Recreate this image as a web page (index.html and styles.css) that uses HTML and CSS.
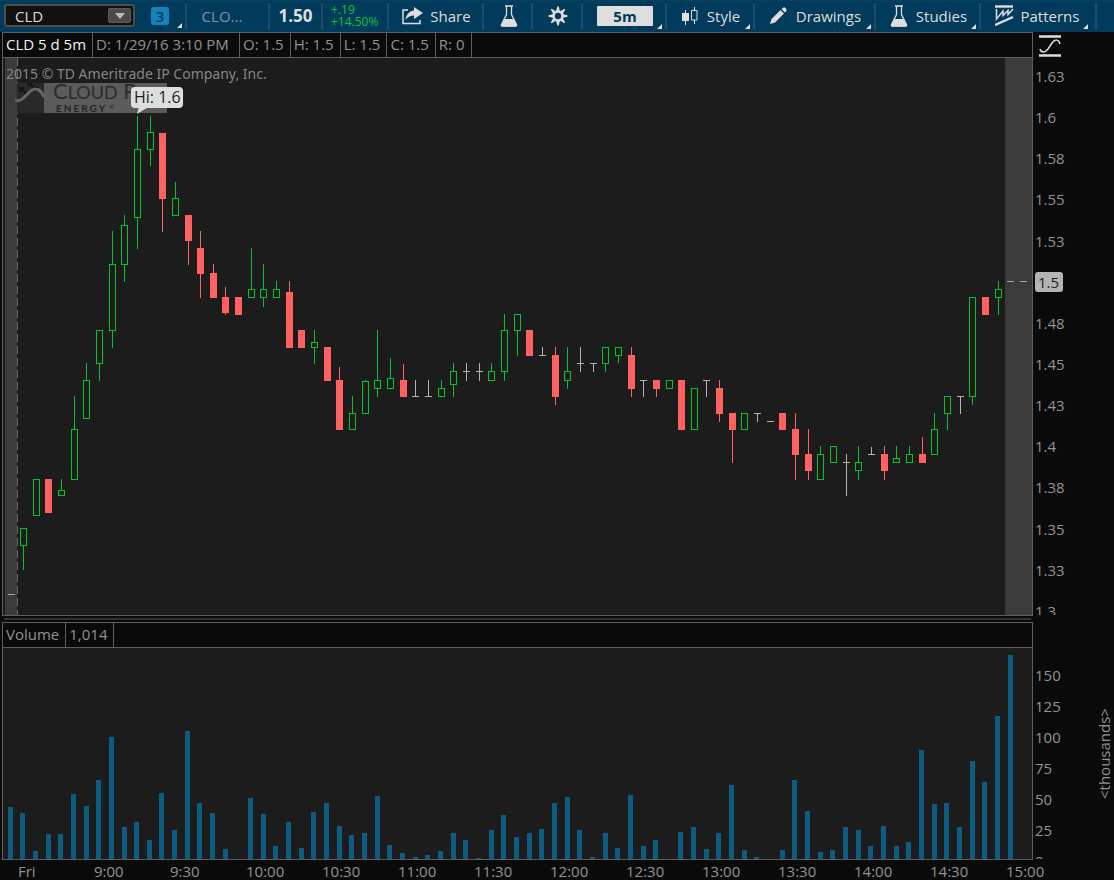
FILE: index.html
```html
<!DOCTYPE html>
<html lang="en">
<head>
<meta charset="utf-8">
<title>CLD 5 d 5m</title>
<link rel="stylesheet" href="styles.css">
</head>
<body>
<header class="toolbar">
  <div class="tool symbol-cell">
    <div class="combo">
      <input class="combo-input" type="text" value="CLD" aria-label="Symbol">
      <button class="combo-arrow" aria-label="Symbol list"><svg width="10" height="6" viewBox="0 0 10 6"><path d="M0 0H10L5 6Z" fill="#b9b9b9"/></svg></button>
    </div>
    <button class="link-button menu"><span class="link-badge">3</span></button>
  </div>
  <div class="tool name-cell">CLO...</div>
  <div class="tool last-cell">1.50</div>
  <div class="tool change-cell"><span>+.19</span><span>+14.50%</span></div>
  <button class="tool share-cell">
    <svg width="21" height="18" viewBox="0 0 21 18"><path d="M6 3H1V16.500H18V13" fill="none" stroke="#dedede" stroke-width="1.500"/><path d="M12 0L21 6L12 12V8.500C8.500 8.500 6 9.500 3.500 13C4 8 7 4 12 3.500Z" fill="#dedede"/></svg>
    Share</button>
  <button class="tool flask-cell" aria-label="Edit studies">
    <svg width="18" height="22" viewBox="0 0 18 22"><path d="M5 1H13M6.500 1V9.500L1.500 19.500Q1 21 2.500 21H15.500Q17 21 16.500 19.500L11.500 9.500V1" fill="none" stroke="#dedede" stroke-width="1.300"/><path d="M4.500 14H13.500L17 20.500Q17 21.500 15.500 21.500H2.500Q1 21.500 1 20.500Z" fill="#dedede"/></svg>
  </button>
  <button class="tool gear-cell" aria-label="Settings">
    <svg width="20" height="20" viewBox="-10 -10 20 20"><g fill="#dedede"><path d="M-1.800 -5L-.7 -9.500H.7L1.800 -5Z" id="tooth"/><use href="#tooth" transform="rotate(45)"/><use href="#tooth" transform="rotate(90)"/><use href="#tooth" transform="rotate(135)"/><use href="#tooth" transform="rotate(180)"/><use href="#tooth" transform="rotate(225)"/><use href="#tooth" transform="rotate(270)"/><use href="#tooth" transform="rotate(315)"/></g><circle r="4.500" fill="none" stroke="#dedede" stroke-width="2.600"/></svg>
  </button>
  <button class="tool period-cell menu"><span class="period">5m</span></button>
  <button class="tool style-cell menu">
    <svg width="16" height="18" viewBox="0 0 16 18"><path d="M3.500 3V18M12.500 0V3M12.500 13V17" stroke="#dedede"/><path d="M0 6H7V14H0Z" fill="#dedede"/><path d="M9.500 3.500H15V13H9.500Z" fill="none" stroke="#dedede"/></svg>
    Style</button>
  <button class="tool drawings-cell menu">
    <svg width="17" height="17" viewBox="0 0 17 17"><path d="M0 17L1.500 12L10.500 3L14 6.500L5 15.500ZM11.500 2L13.500 .5Q14.500 0 15.500 1L16.500 2.500Q17 3.500 16 4.500L15 5.500Z" fill="#dedede"/></svg>
    Drawings</button>
  <button class="tool studies-cell menu">
    <svg width="18" height="22" viewBox="0 0 18 22"><path d="M5 1H13M6.500 1V9.500L1.500 19.500Q1 21 2.500 21H15.500Q17 21 16.500 19.500L11.500 9.500V1" fill="none" stroke="#dedede" stroke-width="1.300"/><path d="M4.500 14H13.500L17 20.500Q17 21.500 15.500 21.500H2.500Q1 21.500 1 20.500Z" fill="#dedede"/></svg>
    Studies</button>
  <button class="tool patterns-cell menu">
    <svg width="19" height="21" viewBox="0 0 19 21"><path d="M0 1.500H18" stroke="#dedede" stroke-width="2.400"/><path d="M0 20L18 12" stroke="#dedede" stroke-width="2.400"/><path d="M1.500 4V14L8 6V10.500L13 5.500V9.500L18 4" fill="none" stroke="#dedede" stroke-width="1.500"/></svg>
    Patterns</button>
</header>

<main class="chart">
  <section class="panel price-panel" aria-label="Price">
    <div class="status">
      <span class="status-title">CLD 5 d 5m</span><span class="status-date">D: 1/29/16 3:10 PM</span><span>O: 1.5</span><span>H: 1.5</span><span>L: 1.5</span><span>C: 1.5</span><span>R: 0</span>
    </div>
    <div class="plot">
      <svg class="series" id="price" viewBox="3 58 1029 557" preserveAspectRatio="none">
        <path d="M5 58H17V615H5ZM1005 58H1032V615H1005Z" fill="#3b3b3b"/>
        <path d="M17.500 58V615" stroke="#666" stroke-dasharray="8 4"/>
        <path d="M8 594.500H15M1007 281.500H1014M1020 281.500H1027" stroke="#a8a8a8"/>
      </svg>
      <div class="company">
        <p class="copyright">2015 © TD Ameritrade IP Company, Inc.</p>
        <svg class="logo" width="152" height="30" viewBox="0 0 152 30">
          <path d="M2 0H29V30H2Z" fill="#292929"/>
          <path d="M4 4H9V9H4ZM12 0H17V3H12ZM19 4H24V7H19ZM9 8H13V12H9ZM16 2H20V5H16Z" fill="#171717"/>
          <path d="M29 0H152V30H29Z" fill="#5b5b5b"/>
          <path d="M0 17C9 21 13 5 21 6C25 6 27 10 29 14" fill="none" stroke="#666" stroke-width="3"/>
          <text x="38" y="16" class="logo-name">C<tspan class="logo-caps">LOUD</tspan> P</text>
          <text x="41" y="29" class="logo-sub">ENERGY</text>
          <text x="94" y="27" class="logo-mark">×</text>
        </svg>
      </div>
      <div class="callout">Hi: 1.6<svg class="callout-tail" width="12" height="7" viewBox="0 0 12 7"><path d="M2 0H12L8 2L0 7Z" fill="#dedede"/></svg></div>
    </div>
  </section>
  <aside class="axis">
    <button class="scale-button" aria-label="Fit scale"><svg width="22" height="22" viewBox="0 0 22 22"><path d="M0 1.500H22M0 20.500H22" stroke="#dedede" stroke-width="2.400"/><path d="M1 14C2 18 6 18 9 14L13 8C16 4 20 4 21 9" fill="none" stroke="#dedede" stroke-width="1.500"/></svg></button>
    <div class="axis-window">
      <ol class="price-scale"><li>1.63</li><li>1.6</li><li>1.58</li><li>1.55</li><li>1.53</li><li><span class="current">1.5</span></li><li>1.48</li><li>1.45</li><li>1.43</li><li>1.4</li><li>1.38</li><li>1.35</li><li>1.33</li><li>1.3</li></ol>
    </div>
  </aside>

  <div class="splitter"></div>

  <section class="panel volume-panel" aria-label="Volume">
    <div class="status"><span>Volume</span><span>1,014</span></div>
    <div class="plot"><svg class="series" id="volume" viewBox="3 648 1029 211" preserveAspectRatio="none"></svg></div>
  </section>
  <aside class="axis volume-axis">
    <div class="axis-window">
      <ol class="volume-scale"><li>150</li><li>125</li><li>100</li><li>75</li><li>50</li><li>25</li><li>0</li></ol>
      <span class="unit">&lt;thousands&gt;</span>
    </div>
  </aside>
</main>

<ol class="time-axis"><li>Fri</li><li>9:00</li><li>9:30</li><li>10:00</li><li>10:30</li><li>11:00</li><li>11:30</li><li>12:00</li><li>12:30</li><li>13:00</li><li>13:30</li><li>14:00</li><li>14:30</li><li>15:00</li></ol>
<script src="chart.js"></script>
</body>
</html>
```
FILE: styles.css
```css
* { box-sizing: border-box; }

body {
  margin: 0;
  height: 100vh;
  display: grid;
  grid-template-columns: minmax(0, 1fr);
  grid-template-rows: 32px minmax(0, 1fr) 20px;
  background: #0a0a0a;
  color: #929292;
  font: 15px/20px "Open Sans", "Noto Sans", sans-serif;
  overflow: hidden;
}

button, input { font: inherit; color: inherit; border: 0; background: none; padding: 0; margin: 0; }
ol { list-style: none; margin: 0; padding: 0; }
p { margin: 0; }
svg { display: block; flex: none; }

/* Toolbar */
.toolbar {
  display: flex;
  padding: 2px 0;
  background: #003b5b;
  border-top: 1px solid #03415f;
  color: #dedede;
}
.toolbar .tool {
  position: relative;
  display: flex;
  align-items: center;
  justify-content: center;
  padding: 0 0 2px;
  border-right: 2px solid #1b4b69;
  white-space: nowrap;
}
.toolbar button.tool { padding-left: 2px; }
.toolbar .menu::after {
  content: "";
  position: absolute;
  right: 3px;
  bottom: 1px;
  border: solid transparent;
  border-width: 0 0 5px 5px;
  border-bottom-color: #dedede;
}
.toolbar .symbol-cell { width: 187px; padding-left: 4px; justify-content: flex-start; }
.combo {
  display: flex;
  align-items: center;
  width: 131px;
  height: 23px;
  border: 2px solid #4c4c4c;
  border-radius: 3px;
  background: #111;
  padding-right: 2px;
}
.combo-input { flex: 1; min-width: 0; padding-left: 9px; color: #dedede; outline: 0; }
.combo-arrow {
  display: flex;
  align-items: center;
  justify-content: center;
  width: 23px;
  height: 15px;
  background: #4a4a4a;
  border: 1px solid #5c5c5c;
  border-radius: 2px;
}
.link-button { position: relative; flex: 1; align-self: stretch; padding-left: 16px; display: flex; align-items: center; }
.link-badge { width: 18px; height: 18px; border-radius: 3px; background: #1583b9; color: #063d5c; line-height: 18px; text-align: center; font-weight: 600; }
.toolbar .link-button::after { bottom: 0; }
.toolbar .name-cell { width: 83px; color: #7d94a3; padding-right: 11px; }
.toolbar .last-cell { width: 53px; font-size: 17px; font-weight: 700; }
.toolbar .change-cell { width: 66px; flex-direction: column; align-items: flex-start; padding-left: 8px; color: #0cc43a; font-size: 12px; line-height: 12px; }
.toolbar .share-cell { width: 95px; gap: 7px; }
.toolbar .flask-cell { width: 49px; padding-left: 0; }
.toolbar .gear-cell { width: 50px; padding-left: 0; }
.toolbar .period-cell { width: 84px; }
.period { width: 56px; height: 20px; border-radius: 1px; background: #dedede; color: #003b5b; font-weight: 700; line-height: 20px; }
.toolbar .style-cell { width: 88px; gap: 9px; }
.toolbar .drawings-cell { width: 121px; gap: 9px; }
.toolbar .studies-cell { width: 105px; gap: 8px; }
.toolbar .patterns-cell { width: 116px; gap: 7px; padding-right: 4px; }
.toolbar .patterns-cell::after { right: 7px; }

/* Chart area */
.chart {
  display: grid;
  grid-template-columns: minmax(0, 1fr) 81px;
  grid-template-rows: minmax(0, 584fr) 6px minmax(0, 238fr);
  padding-left: 2px;
  min-height: 0;
}
.panel {
  display: grid;
  grid-template-rows: 25px minmax(0, 1fr);
  border: 1px solid #5f5f5f;
  background: #1c1c1c;
  min-height: 0;
}
.status { display: flex; background: #0a0a0a; border-bottom: 1px solid #5f5f5f; line-height: 23px; white-space: nowrap; }
.status span { padding: 0 6px 0 3px; border-right: 1px solid #5f5f5f; }
.status .status-title { color: #f2f2f2; }
.status .status-date { min-width: 147px; }
.plot { position: relative; min-height: 0; }
.series { width: 100%; height: 100%; shape-rendering: crispEdges; }
.rise { fill: none; stroke: #00c42e; }
.fall { fill: #ff6060; stroke: #ff6060; }
.flat { fill: none; stroke: #b4b4b4; }
.bar { fill: #0b5c80; }

.company { position: absolute; left: 3px; top: 6px; }
.copyright { font-family: "Noto Sans", sans-serif; font-size: 14px; line-height: 20px; color: #858585; }
.logo { margin: -1px 0 0 9px; }
.logo-name { font: 22px "Lato", sans-serif; fill: #2b2b2b; }
.logo-caps { font-size: 18px; }
.logo-sub { font: 900 10px "Lato", sans-serif; letter-spacing: 2px; fill: #292929; }
.logo-mark { font: 8px "Noto Sans", sans-serif; fill: #292929; }
.callout {
  position: absolute;
  left: 128px;
  top: 29px;
  padding: 0 2px 0 3px;
  border-radius: 4px;
  background: #dedede;
  color: #222;
  font-size: 16px;
  line-height: 21px;
}
.callout-tail { position: absolute; left: 6px; top: 20px; }

.splitter { grid-column: 1 / -1; height: 2px; margin: 2px 83px 0 2px; background: #333; }

/* Scales */
.axis { display: grid; grid-template-rows: 26px minmax(0, 1fr) 1px; min-height: 0; }
.scale-button { margin-left: 6px; justify-self: start; align-self: start; padding-top: 3px; }
.axis-window { position: relative; overflow: hidden; grid-row: 2; }
.axis li { min-height: 0; padding-left: 2px; }
.price-scale { display: grid; grid-template-rows: repeat(13, minmax(0, 41fr)) minmax(0, 24fr); height: calc(100% + 2px); margin-top: -2px; line-height: 40px; }
.current { display: inline-block; padding: 0 4px 0 3px; border-radius: 3px; background: #b4b4b4; color: #1c1c1c; line-height: 20px; }
.volume-scale { display: grid; grid-template-rows: repeat(6, minmax(0, 31fr)) minmax(0, 13fr); height: 100%; padding-top: 12px; line-height: 30px; }
.unit { position: absolute; right: 0; top: 0; height: 100%; text-align: center; writing-mode: vertical-rl; transform: rotate(180deg); }

.time-axis { display: grid; grid-template-columns: repeat(13, minmax(0, 76fr)) minmax(0, 108fr); padding-left: 18px; line-height: 22px; white-space: nowrap; }
```
FILE: chart.js
```js
// Each candle: kind, high, body top, body bottom, low (plot coordinates).
const candles = `
G 528 528 546 570|G 479 479 516 516|R 479 479 513 513|G 479 490 496 496|G 396 429 480 480|G 363 380 419 419
G 330 330 364 381|G 231 264 331 348|G 215 225 265 282|G 116 149 218 249|G 116 132 150 166|R 133 133 199 232
G 182 198 216 216|R 215 215 241 265|R 231 248 274 298|R 264 273 298 298|R 287 297 313 315|R 297 297 315 315
G 248 289 298 298|G 264 289 298 307|G 281 289 298 298|R 281 292 348 348|R 330 330 348 348|G 330 342 348 364
R 347 347 381 381|R 367 380 430 430|G 396 413 430 430|G 380 381 414 414|G 330 380 389 397|G 358 378 389 389
R 364 380 397 397|N 380 396 397 397|N 380 396 397 397|G 380 388 397 397|G 363 371 385 397|N 363 371 372 381
N 363 371 372 381|G 363 371 381 381|G 314 330 372 381|G 314 314 331 356|R 330 330 356 356|N 347 355 356 356
R 347 355 397 405|G 347 371 381 389|N 347 363 364 372|N 363 363 364 372|G 347 347 364 372|G 347 347 356 363
R 347 355 389 397|N 380 380 381 397|R 380 380 389 397|G 380 380 389 389|R 380 380 430 430|G 388 388 430 430
N 380 380 381 397|R 380 388 414 422|R 413 413 430 463|G 413 413 430 430|N 413 413 414 422|N 421 421 422 422
R 413 413 430 430|R 413 429 455 480|R 429 454 471 480|G 446 454 480 480|G 446 446 463 463|N 454 462 463 496
G 446 462 471 480|N 447 454 455 455|R 446 454 471 480|G 446 458 463 463|G 446 454 463 463|R 437 454 463 463
G 413 429 455 455|G 396 396 414 430|N 396 396 397 414|G 297 297 397 405|R 297 297 315 315|G 281 289 298 315`
  .trim().split(/[|\n]/).map(row => row.split(" "));

// Top of each volume bar; 0 is a period with no trades.
const volumes = [
  807, 813, 851, 834, 834, 794, 806, 780, 737, 827, 822, 840, 793, 830, 731, 803, 813, 849, 0, 798,
  814, 846, 822, 848, 812, 803, 826, 835, 833, 796, 845, 853, 857, 855, 851, 833, 840, 858, 830, 815,
  837, 833, 829, 803, 797, 830, 857, 833, 848, 795, 846, 840, 0, 832, 827, 849, 833, 785, 850, 857,
  0, 850, 780, 811, 852, 850, 827, 830, 846, 826, 846, 842, 750, 804, 803, 827, 761, 782, 716, 655
];
const STEP = 12.658;
const BASELINE = 859;

function draw(parent, className, d) {
  const path = document.createElementNS("http://www.w3.org/2000/svg", "path");
  path.setAttribute("class", className);
  path.setAttribute("d", d);
  parent.appendChild(path);
}

const price = document.getElementById("price");
const kinds = { G: "rise", R: "fall", N: "flat" };
candles.forEach(([kind, ...levels], i) => {
  const [high, top, bottom, low] = levels.map(Number);
  const x = Math.floor(23.45 + STEP * i) + 0.5;
  let d = `M${x} ${high}V${top}M${x} ${bottom}V${low}`;
  if (kind === "N") d += `M${x - 3.5} ${top + 0.5}h7`;
  else d += `M${x - 3} ${top + 0.5}h6V${bottom - 0.5}h-6Z`;
  draw(price, kinds[kind], d);
});

const volume = document.getElementById("volume");
volumes.forEach((top, i) => {
  if (top) draw(volume, "bar", `M${Math.floor(10.1 + STEP * i) - 2} ${top}h5V${BASELINE}h-5Z`);
});
```
